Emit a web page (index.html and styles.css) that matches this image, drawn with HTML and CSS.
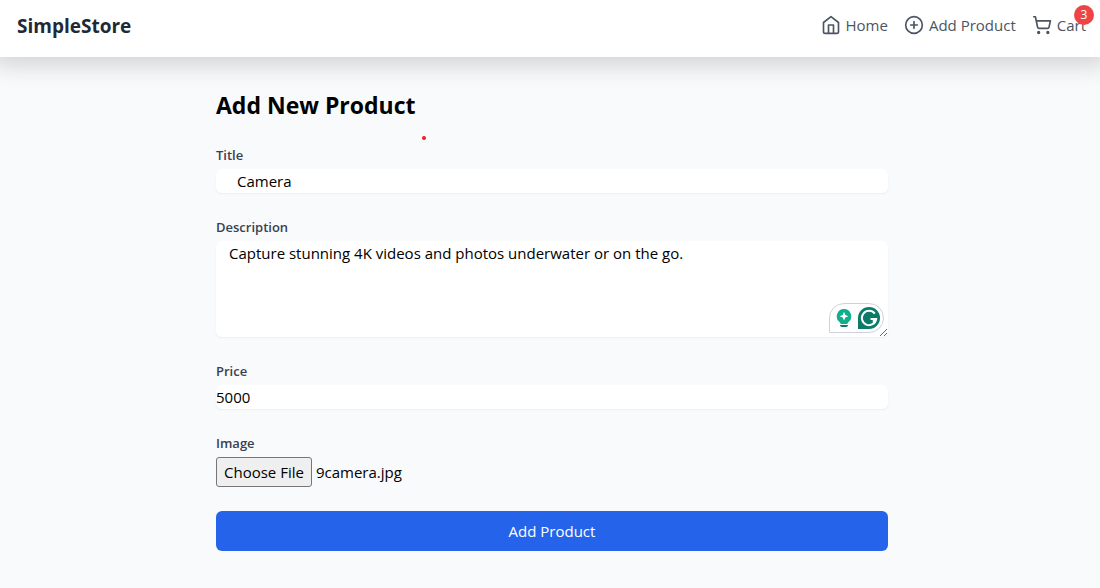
FILE: index.html
```html
<!DOCTYPE html>
<html lang="en">
<head>
<meta charset="utf-8">
<meta name="viewport" content="width=device-width, initial-scale=1">
<title>SimpleStore</title>
<link rel="stylesheet" href="styles.css">
</head>
<body>
<header class="header">
  <a class="brand" href="#">SimpleStore</a>
  <nav class="nav">
    <a class="nav-link" href="#">
      <svg class="icon" viewBox="0 0 24 24"><path d="m3 9 9-7 9 7v11a2 2 0 0 1-2 2H5a2 2 0 0 1-2-2z"/><path d="M9 22V12h6v10"/></svg>
      <span>Home</span>
    </a>
    <a class="nav-link" href="#">
      <svg class="icon" viewBox="0 0 24 24"><circle cx="12" cy="12" r="10"/><path d="M8 12h8M12 8v8"/></svg>
      <span>Add Product</span>
    </a>
    <a class="nav-link" href="#">
      <svg class="icon" viewBox="0 0 24 24"><circle cx="8" cy="21" r="1"/><circle cx="19" cy="21" r="1"/><path d="M2.05 2.05h2l2.66 12.42a2 2 0 0 0 2 1.58h9.78a2 2 0 0 0 1.95-1.57l1.65-7.43H5.12"/></svg>
      <span>Cart</span>
      <span class="badge">3</span>
    </a>
  </nav>
</header>
<main class="main">
  <form class="form">
    <h1 class="heading">Add New Product</h1>
    <span class="marker"></span>
    <div class="field">
      <label class="label" for="title">Title</label>
      <input class="control control-title" id="title" type="text" value="Camera">
    </div>
    <div class="field">
      <label class="label" for="description">Description</label>
      <div class="editor">
        <textarea class="control control-area" id="description" spellcheck="false">Capture stunning 4K videos and photos underwater or on the go.</textarea>
        <div class="assistant">
          <svg class="bulb" viewBox="0 0 16 20"><path fill="#0fae8c" d="M8 1a7.300 7.300 0 0 0-4.500 13Q4.400 14.800 4.700 16h6.600q.3-1.200 1.200-2A7.300 7.300 0 0 0 8 1z"/><path fill="#fff" d="M8 3.800 9.300 6.900 12.400 8.200 9.300 9.500 8 12.600 6.700 9.500 3.600 8.200 6.700 6.900z"/><path fill="#087a65" d="M4 17h8q0 2-2 2H6q-2 0-2-2z"/></svg>
          <svg class="mark" viewBox="0 0 22 22"><path fill="#0b7a68" d="M11 0a11 11 0 0 1 0 22H0V11A11 11 0 0 1 11 0z"/><path fill="none" stroke="#fff" stroke-width="2" d="M16.800 6.600A7.200 7.200 0 1 0 18.200 12H12.500M15.800 12v5.200"/></svg>
        </div>
      </div>
    </div>
    <div class="field">
      <label class="label" for="price">Price</label>
      <input class="control" id="price" type="text" inputmode="decimal" value="5000">
    </div>
    <div class="field">
      <label class="label" for="image">Image</label>
      <input class="file" id="image" type="file" accept="image/*">
    </div>
    <button class="submit" type="submit">Add Product</button>
  </form>
</main>
<script src="script.js"></script>
</body>
</html>
```
FILE: styles.css
```css
* {
  box-sizing: border-box;
}

body {
  margin: 0;
  background: #f9fafb;
  color: #000;
  font-family: "Segoe UI", "Open Sans", "Noto Sans", sans-serif;
  font-size: 15px;
  line-height: 24px;
}

.header {
  display: flex;
  align-items: center;
  justify-content: space-between;
  padding: 12px 14px 17px 17px;
  background: #fff;
  box-shadow: 0 0 24px 8px rgba(0, 0, 0, 0.16);
}

.brand {
  color: #1f2937;
  font-size: 19px;
  font-weight: 700;
  line-height: 28px;
  text-decoration: none;
}

.nav {
  display: flex;
  gap: 16px;
  padding-bottom: 2px;
}

.nav-link {
  position: relative;
  display: flex;
  align-items: center;
  gap: 5px;
  color: #4b5563;
  text-decoration: none;
}

.icon {
  width: 20px;
  height: 20px;
  fill: none;
  stroke: currentColor;
  stroke-width: 2;
  stroke-linecap: round;
  stroke-linejoin: round;
}

.badge {
  position: absolute;
  top: -8px;
  right: -8px;
  width: 20px;
  height: 20px;
  border-radius: 50%;
  background: #ef4444;
  color: #fff;
  font-size: 12px;
  line-height: 20px;
  text-align: center;
}

.main {
  padding: 33px 0 32px 4px;
}

.form {
  position: relative;
  display: flex;
  flex-direction: column;
  gap: 24px;
  max-width: 672px;
  margin: 0 auto;
}

.heading {
  margin: 0;
  font-size: 23px;
  font-weight: 700;
  line-height: 31px;
}

.marker {
  position: absolute;
  top: 46px;
  left: 206px;
  width: 4px;
  height: 4px;
  border-radius: 50%;
  background: #ed1c24;
}

.field {
  display: flex;
  flex-direction: column;
  gap: 4px;
}

.label {
  color: #374151;
  font-size: 13px;
  font-weight: 600;
  line-height: 20px;
}

.control {
  display: block;
  width: 100%;
  height: 24px;
  padding: 0;
  border: 0;
  border-radius: 6px;
  background: #fff;
  box-shadow: 0 1px 2px rgba(0, 0, 0, 0.05);
  color: #000;
  font: inherit;
}

.control-title {
  padding: 0 21px;
}

.control-area {
  height: 96px;
  padding: 0 13px;
  resize: vertical;
}

.editor {
  position: relative;
}

.assistant {
  position: absolute;
  right: 4px;
  bottom: 4px;
  display: flex;
  align-items: center;
  gap: 6px;
  height: 30px;
  padding: 0 3px 0 6px;
  border: 1px solid #cfd0df;
  border-radius: 15px 15px 15px 0;
  background: #fff;
}

.bulb {
  width: 16px;
  height: 20px;
}

.mark {
  width: 22px;
  height: 22px;
}

.file {
  width: 100%;
  height: 30px;
  font: inherit;
  line-height: 24px;
}

.file::file-selector-button {
  height: 30px;
  margin: 0 4px 0 0;
  padding: 1px 7px;
  border: 1px solid #767676;
  border-radius: 3px;
  background: #efefef;
  color: #000;
  font: inherit;
}

.submit {
  height: 40px;
  border: 0;
  border-radius: 6px;
  background: #2563eb;
  color: #fff;
  font: inherit;
}
```
FILE: script.js
```js
// Preselect the product image in the file field.
const selection = new DataTransfer();
selection.items.add(new File([""], "9camera.jpg", { type: "image/jpeg" }));
document.getElementById("image").files = selection.files;
```
